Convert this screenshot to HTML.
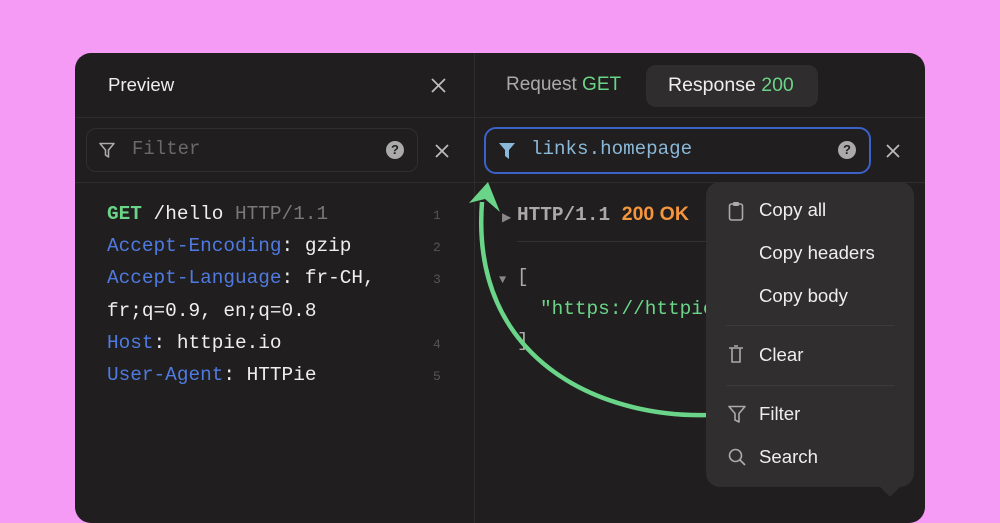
<!DOCTYPE html>
<html><head><style>
body{margin:0;width:1000px;height:500px;background:#f59af5;overflow:hidden;position:relative;font-family:"Liberation Sans",sans-serif}
.panel{position:absolute;left:75px;top:53px;width:850px;height:470px;background:#201e1e;border-radius:16px;overflow:hidden}
.abs{position:absolute}
.line{position:absolute;background:#2e2c2c}
.mono{font-family:"Liberation Mono",monospace}
.code{position:absolute;font-size:19.4px;color:#eee;white-space:pre}
.num{position:absolute;font-size:13px;color:#555;font-family:"Liberation Mono",monospace}
.b{color:#4f7ae0}.g{color:#6ad488;font-weight:bold}.gr{color:#7a7777}
.menu{position:absolute;left:706px;top:182px;width:208px;height:305px;background:#302e2f;border-radius:14px}
.mi{position:absolute;left:53px;font-size:18.6px;color:#eee}
.ic{position:absolute;left:22px}
</style></head><body>
<div class="panel">
 <div class="line" style="left:399px;top:0;width:1px;height:470px"></div>
 <div class="line" style="left:0;top:64px;width:850px;height:1px"></div>
 <div class="line" style="left:0;top:129px;width:850px;height:1px"></div>
 <div class="abs" style="left:33px;top:21px;font-size:18.6px;color:#eee">Preview</div>
 <svg class="abs" style="left:356px;top:25px" width="15" height="15"><path d="M1 1L14 14M14 1L1 14" stroke="#bbb" stroke-width="1.8"/></svg>
 <div class="abs" style="left:431px;top:21px;font-size:19px;color:#aaa">Request <span style="color:#6ad488">GET</span></div>
 <div class="abs" style="left:571px;top:12px;width:172px;height:42px;background:#2f2d2d;border-radius:10px"></div>
 <div class="abs" style="left:593px;top:21px;font-size:19.5px;color:#eee">Response <span style="color:#6ad488">200</span></div>
 <div class="abs" style="left:11px;top:75px;width:330px;height:42px;border:1px solid #302e2e;border-radius:10px"></div>
 <svg class="abs" style="left:24px;top:89px" width="16" height="16"><path d="M1 1.5H15L9.5 8V15L6.5 13V8Z" fill="none" stroke="#aaa" stroke-width="1.6" stroke-linejoin="round"/></svg>
 <div class="abs mono" style="left:57px;top:85px;font-size:19px;color:#6b6868">Filter</div>
 <div class="abs" style="left:311px;top:88px;width:18px;height:18px;border-radius:50%;background:#aaa;color:#201e1e;font-size:13px;font-weight:bold;text-align:center;line-height:18px">?</div>
 <svg class="abs" style="left:360px;top:91px" width="14" height="14"><path d="M1 1L13 13M13 1L1 13" stroke="#bbb" stroke-width="1.8"/></svg>
 <div class="abs" style="left:409px;top:74px;width:383px;height:43px;border:2px solid #3b62c9;border-radius:12px"></div>
 <svg class="abs" style="left:423px;top:89px" width="18" height="18"><path d="M1 1H17L11 8V17L7 14V8Z" fill="#8ab8d8"/></svg>
 <div class="abs mono" style="left:456px;top:85px;font-size:19.2px;color:#8ab8d8">links.homepage</div>
 <div class="abs" style="left:763px;top:88px;width:18px;height:18px;border-radius:50%;background:#aaa;color:#201e1e;font-size:13px;font-weight:bold;text-align:center;line-height:18px">?</div>
 <svg class="abs" style="left:811px;top:91px" width="14" height="14"><path d="M1 1L13 13M13 1L1 13" stroke="#bbb" stroke-width="1.8"/></svg>
 <div class="code mono" style="left:32px;top:150px"><span class="g">GET</span> /hello <span class="gr">HTTP/1.1</span></div>
 <div class="code mono" style="left:32px;top:182px"><span class="b">Accept-Encoding</span>: gzip</div>
 <div class="code mono" style="left:32px;top:214px"><span class="b">Accept-Language</span>: fr-CH,</div>
 <div class="code mono" style="left:32px;top:247px">fr;q=0.9, en;q=0.8</div>
 <div class="code mono" style="left:32px;top:279px"><span class="b">Host</span>: httpie.io</div>
 <div class="code mono" style="left:32px;top:311px"><span class="b">User-Agent</span>: HTTPie</div>
 <div class="num" style="left:358px;top:155px">1</div>
 <div class="num" style="left:358px;top:187px">2</div>
 <div class="num" style="left:358px;top:219px">3</div>
 <div class="num" style="left:358px;top:284px">4</div>
 <div class="num" style="left:358px;top:316px">5</div>
 <div class="code mono" style="left:427px;top:157px;font-size:12px;color:#888">▶</div>
 <div class="code mono" style="left:442px;top:150px;color:#aaa;font-weight:bold">HTTP/1.1 <span style="color:#f5953c;font-family:'Liberation Sans',sans-serif;font-size:19.5px">200 OK</span></div>
 <div class="line" style="left:442px;top:188px;width:200px;height:1px;background:#343232"></div>
 <div class="code mono" style="left:424px;top:220px;font-size:12px;color:#888">▼</div>
 <div class="code mono" style="left:442px;top:213px;color:#aaa">[</div>
 <div class="code mono" style="left:465px;top:245px;color:#6ad488">"https://httpie</div>
 <div class="code mono" style="left:442px;top:277px;color:#aaa">]</div>
</div>
<svg class="abs" style="left:0;top:0" width="1000" height="500">
 <path d="M708 415 C600 418 470 360 482 202" fill="none" stroke="#6ad488" stroke-width="4.5"/>
 <path d="M469 203 L488 182 L500 212 L485 199 Z" fill="#6ad488"/>
</svg>
<div class="menu">
 <svg class="ic" style="top:19px" width="16" height="20"><rect x="1.5" y="3" width="13" height="16" rx="2" fill="none" stroke="#aaa" stroke-width="1.6"/><rect x="5" y="1" width="6" height="4" rx="1" fill="#aaa"/></svg>
 <div class="mi" style="top:17px">Copy all</div>
 <div class="mi" style="top:60px">Copy headers</div>
 <div class="mi" style="top:103px">Copy body</div>
 <div class="line" style="left:20px;top:143px;width:168px;height:1px;background:#3c3a3b"></div>
 <svg class="ic" style="top:163px" width="16" height="19"><path d="M1 3H15M4 3V17H12V3M6 1H10" fill="none" stroke="#aaa" stroke-width="1.6"/></svg>
 <div class="mi" style="top:162px">Clear</div>
 <div class="line" style="left:20px;top:203px;width:168px;height:1px;background:#3c3a3b"></div>
 <svg class="ic" style="top:223px" width="18" height="18"><path d="M1 1.5H17L11 8.5V17L7 15V8.5Z" fill="none" stroke="#aaa" stroke-width="1.6" stroke-linejoin="round"/></svg>
 <div class="mi" style="top:221px">Filter</div>
 <svg class="ic" style="top:266px" width="18" height="18"><circle cx="7.5" cy="7.5" r="6" fill="none" stroke="#aaa" stroke-width="1.6"/><path d="M12 12L17 17" stroke="#aaa" stroke-width="1.8"/></svg>
 <div class="mi" style="top:264px">Search</div>
 <div class="abs" style="left:177px;top:298px;width:14px;height:14px;background:#302e2f;transform:rotate(45deg)"></div>
</div>
</body></html>
